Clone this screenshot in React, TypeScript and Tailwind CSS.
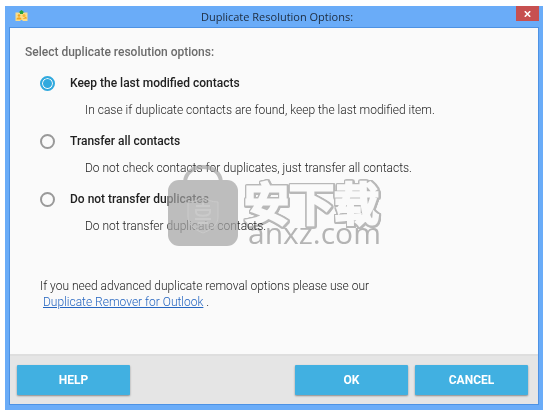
import React, { useState } from 'react';

interface Option {
  id: string;
  label: string;
  hint: string;
}

const OPTIONS: Option[] = [
  {
    id: 'keep-last',
    label: 'Keep the last modified contacts',
    hint: 'In case if duplicate contacts are found, keep the last modified item.',
  },
  {
    id: 'transfer-all',
    label: 'Transfer all contacts',
    hint: 'Do not check contacts for duplicates, just transfer all contacts.',
  },
  {
    id: 'skip',
    label: 'Do not transfer duplicates',
    hint: 'Do not transfer duplicate contacts.',
  },
];

function AppIcon() {
  return (
    <svg width="13" height="12" viewBox="0 0 13 12" aria-hidden="true">
      <path d="M0.5 2.5h5v1h2v-1h5V11h-5v-1h-2v1h-5z" fill="#f9dc8b" />
      <circle cx="4" cy="5.5" r="1.3" fill="#f2a51f" />
      <path d="M1.5 9.5c0-3 5-3 5 0z" fill="#f2a51f" />
      <circle cx="9" cy="5.5" r="1.5" fill="#f7b733" />
      <path d="M7.5 9l3.5-2.5 1 2z" fill="#f2a51f" />
      <path d="M6.5 0L9.5 2.5H8V4H5V2.5H3.5z" fill="#27a338" />
    </svg>
  );
}

function TitleBar() {
  return (
    <header className="grid grid-cols-[1fr_auto_1fr] h-[21px] pl-1.5">
      <div className="pt-1">
        <AppIcon />
      </div>
      <h1 className="font-['Open_Sans',sans-serif] text-[11px] leading-[22px] text-[#1d2b3d]">
        Duplicate Resolution Options:
      </h1>
      <button
        type="button"
        aria-label="Close"
        className="justify-self-end flex items-center justify-center w-[23px] h-[15px] bg-[#c75050]"
      >
        <svg width="7" height="6" viewBox="0 0 7 6" aria-hidden="true">
          <path d="M0.8 0.3l5.4 5.4M6.2 0.3L0.8 5.7" stroke="#fff" strokeWidth="1.6" />
        </svg>
      </button>
    </header>
  );
}

interface OptionRowProps {
  option: Option;
  checked: boolean;
  onSelect: (id: string) => void;
}

function OptionRow({ option, checked, onSelect }: OptionRowProps) {
  return (
    <div className="h-[58px]">
      <label className="flex items-center gap-[15px] h-5 text-xs font-medium text-[#212121]">
        <input
          type="radio"
          name="resolution"
          checked={checked}
          onChange={() => onSelect(option.id)}
          aria-describedby={`${option.id}-hint`}
          className="appearance-none w-[15px] h-[15px] rounded-full border-2 border-[#999] checked:border-[#30a9de] checked:bg-[#30a9de] checked:shadow-[inset_0_0_0_1px_#fafafa]"
        />
        {option.label}
      </label>
      <p id={`${option.id}-hint`} className="pl-[45px] pt-[7px] text-xs leading-5 font-light text-[#222]">
        {option.hint}
      </p>
    </div>
  );
}

function ActionButton({ children }: { children: React.ReactNode }) {
  return (
    <button
      type="button"
      className="w-[113px] h-[30px] rounded-[1px] bg-[#41b0e1] text-white text-xs font-bold shadow-[0_1px_2px_rgba(0,0,0,0.4)]"
    >
      {children}
    </button>
  );
}

function Watermark() {
  return (
    <div className="absolute left-[158px] top-[137px] flex pointer-events-none select-none">
      <svg width="70" height="82" viewBox="0 0 70 82" aria-hidden="true">
        <g opacity="0.7">
          <path d="M17 17C18 -3 52 -3 53 17" fill="none" stroke="#a4a4a4" strokeWidth="4" />
          <rect y="15" width="70" height="66" rx="11" fill="#a4a4a4" />
        </g>
        <path
          d="M20 37c6 0 11-2 15-5c4 3 9 5 15 5v15c0 8-7 13-15 16c-8-3-15-8-15-16z"
          fill="#ccc"
          fillOpacity="0.2"
          stroke="#cacaca"
        />
        <path
          d="M28 41h14M35 38v3M28 45h14v2c0 5-14 5-14 0zM27 54h16M30 58h10"
          fill="none"
          stroke="#cacaca"
          strokeWidth="2"
        />
      </svg>
      <div className="flex flex-col pl-[6px] pt-3.5 text-[#b8b8b8] mix-blend-multiply">
        <span
          lang="zh"
          className="font-['Noto_Sans_CJK_SC',sans-serif] text-[45px] leading-[46px] font-medium text-white [-webkit-text-stroke:3px_white] [filter:drop-shadow(1px_0_0_#bcbcbc)_drop-shadow(-1px_0_0_#bcbcbc)_drop-shadow(0_1px_0_#bcbcbc)_drop-shadow(0_-1px_0_#bcbcbc)_drop-shadow(1px_0_0_#bcbcbc)_drop-shadow(0_1px_0_#bcbcbc)]"
        >
          安下载
        </span>
        <span className="pl-1 font-['Open_Sans',sans-serif] text-[30px] leading-4 font-medium">anxz.com</span>
      </div>
    </div>
  );
}

export default function App() {
  const [selected, setSelected] = useState('keep-last');

  return (
    <div className="min-h-screen bg-white pl-[5px] pr-[9px] py-1.5 font-[Roboto,sans-serif]">
      <div className="bg-[#6aacf8] px-1 pb-[5px]">
        <TitleBar />
        <main className="relative bg-[#fafafa] border border-[#4d92e4]">
          <form onSubmit={e => e.preventDefault()}>
            <fieldset className="px-[15px] pt-[11px]">
              <legend className="pt-3.5 text-xs leading-5 font-medium text-[#6b6b6b]">
                Select duplicate resolution options:
              </legend>
              <div className="pl-[15px]">
                {OPTIONS.map(o => (
                  <OptionRow
                    key={o.id}
                    option={o}
                    checked={selected === o.id}
                    onSelect={setSelected}
                  />
                ))}
              </div>
            </fieldset>

            <p className="px-[30px] pt-[31px] pb-11 text-xs leading-4 font-light text-[#222]">
              If you need advanced duplicate removal options please use our
              <br />
              <a href="#remover" className="ml-[3px] text-[#2465c0] underline">
                Duplicate Remover for Outlook
              </a>{' '}
              .
            </p>

            <footer className="flex gap-[7px] bg-[#e5e5e5] border-t-2 border-[#dedede] pl-[7px] pr-2.5 py-[9px]">
              <div className="flex-1">
                <ActionButton>HELP</ActionButton>
              </div>
              <ActionButton>OK</ActionButton>
              <ActionButton>CANCEL</ActionButton>
            </footer>
          </form>
          <Watermark />
        </main>
      </div>
    </div>
  );
}
